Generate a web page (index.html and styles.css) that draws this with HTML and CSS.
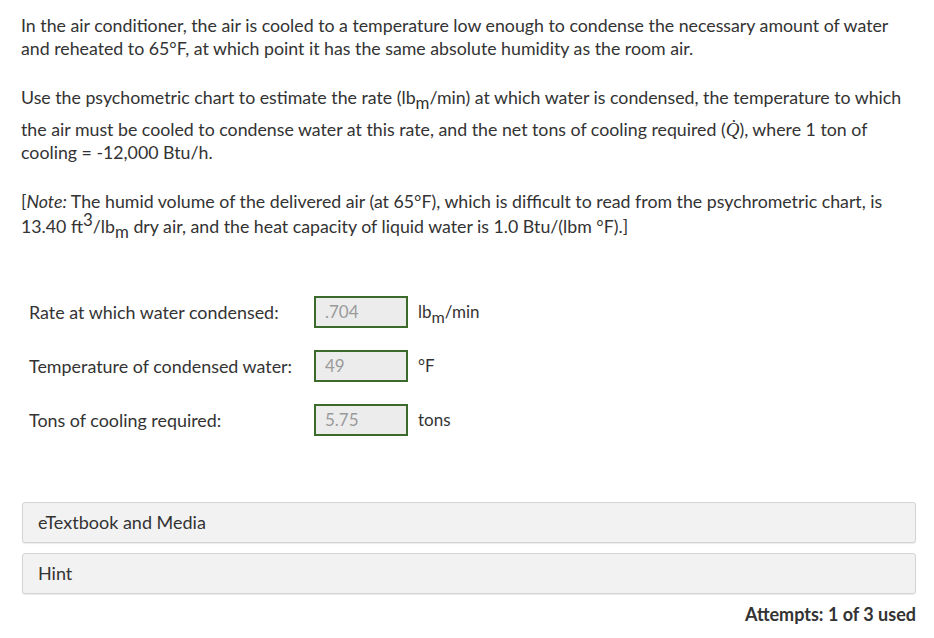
FILE: index.html
```html
<!DOCTYPE html>
<html>
<head>
<meta charset="utf-8">
<link rel="stylesheet" href="styles.css">
</head>
<body>
<div class="page">
  <div class="question">
    <p class="p1">In the air conditioner, the air is cooled to a temperature low enough to condense the necessary amount of water and reheated to 65°F, at which point it has the same absolute humidity as the room air.</p>
    <p class="p2">Use the psychometric chart to estimate the rate (lb<sub>m</sub>/min) at which water is condensed, the temperature to which the air must be cooled to condense water at this rate, and the net tons of cooling required (<span class="q">Q̇</span>), where 1 ton of cooling = -12,000 Btu/h.</p>
    <p class="p3">[<em>Note:</em> The humid volume of the delivered air (at 65°F), which is difficult to read from the psychrometric chart, is 13.40 ft<sup>3</sup>/lb<sub>m</sub> dry air, and the heat capacity of liquid water is 1.0 Btu/(lbm °F).]</p>
  </div>

  <div class="answers">
    <div class="row">
      <span class="label">Rate at which water condensed:</span>
      <span class="field">.704</span>
      <span class="unit">lb<sub>m</sub>/min</span>
    </div>
    <div class="row">
      <span class="label">Temperature of condensed water:</span>
      <span class="field">49</span>
      <span class="unit">°F</span>
    </div>
    <div class="row">
      <span class="label">Tons of cooling required:</span>
      <span class="field">5.75</span>
      <span class="unit">tons</span>
    </div>
  </div>

  <div class="panels">
    <div class="panel">eTextbook and Media</div>
    <div class="panel">Hint</div>
  </div>
  <div class="attempts">Attempts: 1 of 3 used</div>
</div>
</body>
</html>
```
FILE: styles.css
```css
html, body {
  margin: 0;
  padding: 0;
  background: #fff;
}
body {
  font-family: Lato, "Open Sans", sans-serif;
  color: #333;
  font-size: 18px;
}
.page {
  padding: 14px 18px 0 21px;
}
.question p {
  margin: 0 0 26px 0;
  line-height: 23px;
  font-size: 17.75px;
}
.question sub {
  font-size: 0.95em;
  vertical-align: -0.3em;
  line-height: 0;
}
.p2 sub {
  display: inline-block;
  line-height: 1;
  margin-bottom: 6px;
}
.question sup {
  font-size: 0.95em;
  vertical-align: 0.4em;
  line-height: 0.85;
}
.q {
  font-family: "Liberation Serif", serif;
  font-style: italic;
  font-size: 19px;
}
.answers {
  padding: 32px 0 0 8px;
  display: flex;
  flex-direction: column;
  gap: 22px;
}
.row {
  display: grid;
  grid-template-columns: 275px 94px auto;
  column-gap: 10px;
  align-items: center;
}
.label {
  font-size: 17.9px;
}
.field {
  box-sizing: border-box;
  height: 32px;
  border: 2px solid #3b6a2b;
  background: #ececec;
  color: #9a9a9a;
  padding: 0 9px;
  display: flex;
  align-items: center;
  font-size: 17px;
}
.unit {
  font-size: 17px;
}
.unit sub {
  font-size: 0.95em;
  vertical-align: -0.3em;
  line-height: 0;
}
.panels {
  margin-top: 66px;
  display: flex;
  flex-direction: column;
  gap: 10px;
  margin-left: 1px;
}
.panel {
  box-sizing: border-box;
  height: 41px;
  background: #f2f2f2;
  border: 1px solid #d4d4d4;
  border-radius: 3px;
  box-shadow: 0 1px 1px rgba(0,0,0,0.08);
  padding: 0 15px;
  display: flex;
  align-items: center;
  font-size: 18px;
  color: #333;
}
.attempts {
  text-align: right;
  font-weight: bold;
  font-size: 18px;
  margin-top: 9px;
  color: #333;
}
```
